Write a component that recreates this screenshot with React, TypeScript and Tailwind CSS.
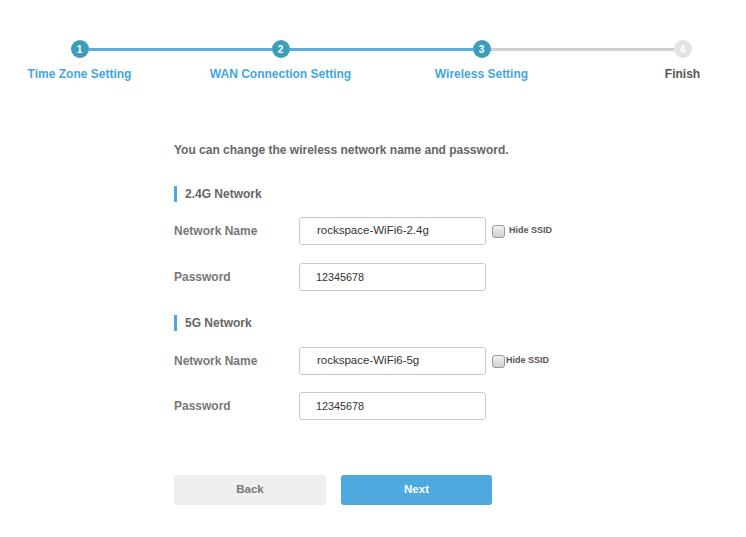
import React from "react";

const steps = [
  { n: 1, label: "Time Zone Setting", done: true },
  { n: 2, label: "WAN Connection Setting", done: true },
  { n: 3, label: "Wireless Setting", done: true },
  { n: 4, label: "Finish", done: false },
];

const Stepper = () => {
  return (
    <div className="w-[804px] ml-[-21px] pt-[40px]">
      {/* CIRCLES + LINES */}
      <div className="flex items-center px-[91.5px]">
        {steps.map((s, i) => (
          <React.Fragment key={s.n}>
            {i > 0 && (
              <div
                className={
                  steps[i].done
                    ? "flex-1 h-[3px] bg-[#5ab0dc]"
                    : "flex-1 h-[3px] bg-[#cfcfcf]"
                }
              />
            )}
            <div
              className={
                s.done
                  ? "w-[18px] h-[18px] rounded-full bg-[#3c9fb7] text-white text-[10px] font-bold flex items-center justify-center"
                  : "w-[18px] h-[18px] rounded-full bg-[#e3e3e3] text-white text-[10px] font-bold flex items-center justify-center"
              }
            >
              {s.n}
            </div>
          </React.Fragment>
        ))}
      </div>
      {/* LABELS */}
      <div className="grid grid-cols-4 mt-[9px]">
        {steps.map((s) => (
          <div
            key={s.n}
            className={
              s.done
                ? "text-center text-[12px] leading-[14px] font-bold text-[#45a6dc]"
                : "text-center text-[12px] leading-[14px] font-bold text-[#555]"
            }
          >
            {s.label}
          </div>
        ))}
      </div>
    </div>
  );
};

const SectionTitle = ({ title }: { title: string }) => (
  <div className="flex items-center gap-[8px] h-[16px]">
    <div className="w-[3px] h-[16px] bg-[#4aa8dd]" />
    <span className="text-[12px] font-bold text-[#666]">{title}</span>
  </div>
);

const HideSsid = ({ tight }: { tight?: boolean }) => (
  <label className={tight ? "flex items-center gap-[1px] ml-[6px]" : "flex items-center gap-[4px] ml-[6px]"}>
    <span className="w-[13px] h-[13px] rounded-[3px] border border-[#9a9a9a] bg-gradient-to-b from-[#f2f2f2] to-[#cfcfcf]" />
    <span className="text-[9px] font-bold text-[#555]">Hide SSID</span>
  </label>
);

const Field = ({
  label,
  value,
  big,
  hide,
}: {
  label: string;
  value: string;
  big?: boolean;
  hide?: "loose" | "tight";
}) => (
  <div className="flex items-center h-[28px]">
    <div className="w-[125px] text-[12px] font-bold text-[#777]">{label}</div>
    <div
      className={
        big
          ? "w-[187px] h-[28px] border border-[#c9c9c9] rounded-[3px] flex items-center pl-[17px] text-[11.5px] text-[#333]"
          : "w-[187px] h-[28px] border border-[#c9c9c9] rounded-[3px] flex items-center pl-[16px] text-[10.8px] text-[#333]"
      }
    >
      {value}
    </div>
    {hide && <HideSsid tight={hide === "tight"} />}
  </div>
);

export default function App() {
  return (
    <div
      className="w-[746px] h-[537px] overflow-hidden bg-white"
      style={{ fontFamily: '"Liberation Sans", Arial, sans-serif' }}
    >
      <Stepper />

      {/* FORM */}
      <div className="pl-[174px] pt-[62px]">
        <p className="text-[12px] leading-[14px] font-bold text-[#666]">
          You can change the wireless network name and password.
        </p>

        <div className="mt-[29px]">
          <SectionTitle title="2.4G Network" />
        </div>
        <div className="mt-[15px] flex flex-col gap-[18px]">
          <Field label="Network Name" value="rockspace-WiFi6-2.4g" big hide="loose" />
          <Field label="Password" value="12345678" />
        </div>

        <div className="mt-[24px]">
          <SectionTitle title="5G Network" />
        </div>
        <div className="mt-[16px] flex flex-col gap-[17px]">
          <Field label="Network Name" value="rockspace-WiFi6-5g" big hide="tight" />
          <Field label="Password" value="12345678" />
        </div>

        {/* BUTTONS */}
        <div className="mt-[55px] flex gap-[15px]">
          <button className="w-[152px] h-[30px] rounded-[3px] bg-[#efefef] text-[11.5px] font-bold text-[#777]">
            Back
          </button>
          <button className="w-[151px] h-[30px] rounded-[3px] bg-[#4ea9df] text-[11.5px] font-bold text-white">
            Next
          </button>
        </div>
      </div>
    </div>
  );
}
